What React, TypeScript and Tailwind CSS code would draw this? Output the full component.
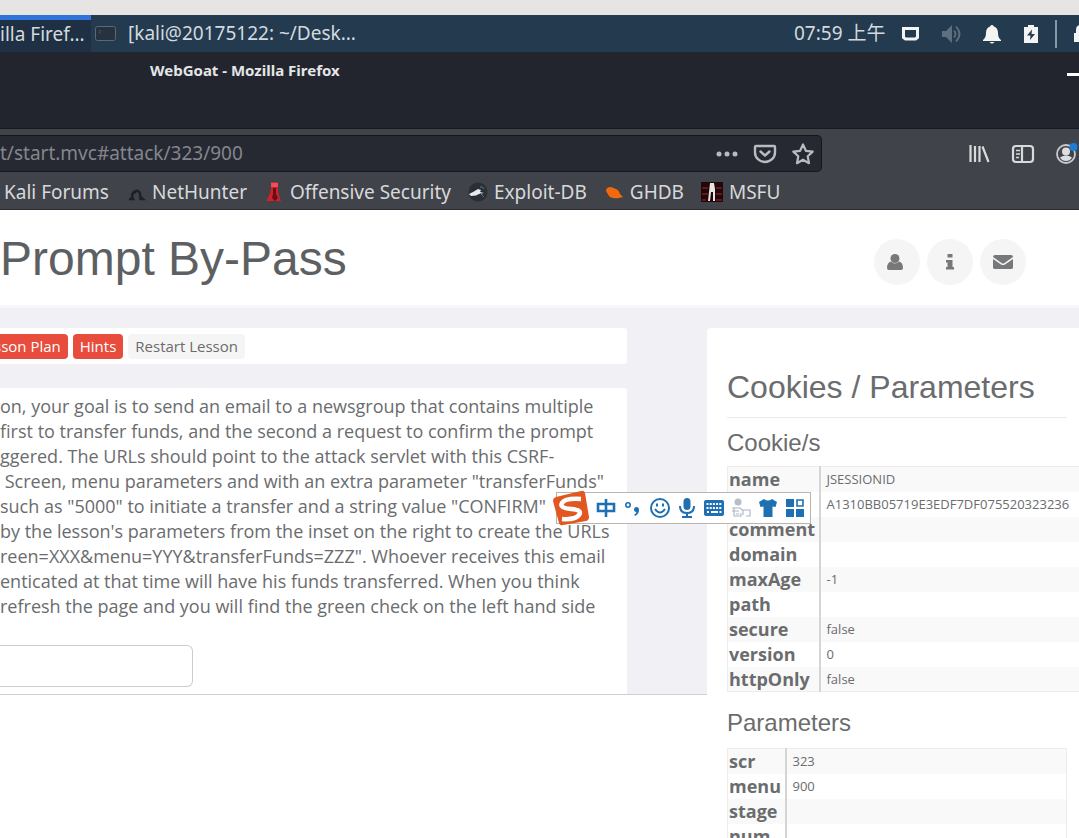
import type { ReactNode } from "react";

const lessonLines = [
  "on, your goal is to send an email to a newsgroup that contains multiple",
  "first to transfer funds, and the second a request to confirm the prompt",
  "ggered. The URLs should point to the attack servlet with this CSRF-",
  "\u00a0Screen, menu parameters and with an extra parameter \"transferFunds\"",
  "such as \"5000\" to initiate a transfer and a string value \"CONFIRM\"",
  "by the lesson's parameters from the inset on the right to create the URLs",
  "reen=XXX&menu=YYY&transferFunds=ZZZ\". Whoever receives this email",
  "enticated at that time will have his funds transferred. When you think",
  "refresh the page and you will find the green check on the left hand side",
];

const cookies = [
  ["name", "JSESSIONID"],
  ["value", "A1310BB05719E3EDF7DF075520323236"],
  ["comment", ""],
  ["domain", ""],
  ["maxAge", "-1"],
  ["path", ""],
  ["secure", "false"],
  ["version", "0"],
  ["httpOnly", "false"],
];

const parameters = [
  ["scr", "323"],
  ["menu", "900"],
  ["stage", ""],
  ["num", ""],
];

const Taskbar = () => (
  <div className="flex h-[37px] items-center bg-[#233a4f] font-['Noto_Sans','Noto_Sans_CJK_SC',sans-serif] text-[19px] text-[#d3d9de]">
    <button className="flex h-full w-[91px] items-center border-t-[5px] border-[#2f74d8] bg-[#1f3044] pb-1 whitespace-nowrap">
      illa Firef...
    </button>
    <button className="flex flex-1 items-center gap-3 pl-1 whitespace-nowrap">
      <svg viewBox="0 0 21 15" className="h-[15px] w-[21px]">
        <rect x="0.5" y="0.5" width="20" height="14" rx="2" fill="#26323f" stroke="#5b6976" />
        <path d="M4 4l2 1.5L4 7" fill="none" stroke="#4a5866" />
      </svg>
      [kali@20175122: ~/Desk...
    </button>
    <div className="flex w-[285px] shrink-0 items-center overflow-hidden whitespace-nowrap">
      <span className="w-[107px] shrink-0">07:59 上午</span>
      <svg viewBox="0 0 20 16" className="mr-[21px] h-4 w-5 shrink-0" fill="none" stroke="#f2f4f5" strokeWidth="3">
        <path d="M2.5 2.5h14v9l-2 1.5h-10l-2-1.5z" />
      </svg>
      <svg viewBox="0 0 20 20" className="mr-5 h-5 w-5 shrink-0" fill="#5e7080">
        <path d="M0 7h4l6-6v18l-6-6H0z" />
        <path d="M12 6.5q3 3.500 0 7M14 2.500q7 7.500 0 15" fill="none" stroke="#5e7080" strokeWidth="1.8" />
      </svg>
      <svg viewBox="0 0 20 20" className="mr-[21px] h-5 w-5 shrink-0" fill="#f4f4f4">
        <path d="M10 1c-1.300 0-1.700.8-1.800 1.500C5.500 3.300 4 5.500 4 8.500c0 5-1.500 6-3 7.500v1h18v-1c-1.500-1.500-3-2.500-3-7.500 0-3-1.500-5.200-4.200-6C11.700 1.800 11.300 1 10 1zM7.500 18h5q-2.500 3-5 0z" />
      </svg>
      <svg viewBox="0 0 16 20" className="mr-4 h-5 w-4 shrink-0">
        <path d="M5 1h6v2h4v16H1V3h4z" fill="#f4f4f4" />
        <path d="M9 5.500l-5 6h3.500L7 16l5-6H8.500z" fill="#233a4f" />
      </svg>
      <span className="mr-4 h-7 w-0.5 shrink-0 bg-[#8798a5]" />
      <svg viewBox="0 0 16 20" className="h-5 w-4 shrink-0" fill="#f4f4f4">
        <path d="M1 9h2V6q0-5 5-5t5 5v3h2v9H1z" />
      </svg>
    </div>
  </div>
);

const Bookmark = ({ label, children }: { label: string; children?: ReactNode }) => (
  <a href="#bookmark" className="flex items-center gap-1.5 whitespace-nowrap">
    {children}
    {label}
  </a>
);

const BrowserChrome = () => (
  <header className="font-['Noto_Sans',sans-serif]">
    <div className="flex h-[76px] items-start bg-[#22252e] pt-2 pl-[150px] text-[#e4e5e7]">
      <h2 className="flex-1 text-[15px] leading-5 font-bold">WebGoat - Mozilla Firefox</h2>
      <button aria-label="Minimize" className="flex h-7 w-3 items-center">
        <span className="h-[3px] w-full bg-white" />
      </button>
    </div>
    <div className="border-t border-b border-t-[#181a20] border-b-[#2b2c30] bg-[#404349]">
      <div className="flex items-center pt-1.5">
        <div className="flex h-[37px] flex-1 items-center rounded-r-[5px] border border-l-0 border-[#15171c] bg-[#262932] pr-1.5">
          <input
            aria-label="Address"
            defaultValue="t/start.mvc#attack/323/900"
            className="min-w-0 flex-1 bg-transparent text-[19px] text-[#83868e] outline-none"
          />
          <div className="flex items-center gap-3.5 text-[#b9bbc0]">
            <button aria-label="Page actions">
              <svg viewBox="0 0 24 24" className="h-6 w-6" fill="currentColor">
                <circle cx="4" cy="12" r="2.500" />
                <circle cx="12" cy="12" r="2.500" />
                <circle cx="20" cy="12" r="2.500" />
              </svg>
            </button>
            <button aria-label="Save to Pocket">
              <svg viewBox="0 0 24 24" className="h-6 w-6" fill="none" stroke="currentColor" strokeWidth="2.400" strokeLinecap="round" strokeLinejoin="round">
                <path d="M3 4h18q1 0 1 1v5.500a10 9.500 0 0 1-20 0V5q0-1 1-1z" />
                <path d="M7.500 9.500l4.500 4 4.500-4" />
              </svg>
            </button>
            <button aria-label="Bookmark this page">
              <svg viewBox="0 0 24 24" className="h-6 w-6" fill="none" stroke="currentColor" strokeWidth="2.200" strokeLinejoin="round">
                <path d="M12 2.500l2.900 6.300 6.800.8-5 4.700 1.300 6.900L12 17.700l-6 3.500 1.300-6.900-5-4.700 6.800-.8z" />
              </svg>
            </button>
          </div>
        </div>
        <div className="flex w-[257px] shrink-0 items-center gap-5 overflow-hidden pl-[145px] text-[#d9dadc]">
          <button aria-label="Library" className="shrink-0">
            <svg viewBox="0 0 24 24" className="h-6 w-6" fill="none" stroke="currentColor" strokeWidth="2.200">
              <path d="M3.500 3v17M8 4v16M12.500 4v16M15.500 4.500l6 15.500" />
            </svg>
          </button>
          <button aria-label="Sidebars" className="shrink-0">
            <svg viewBox="0 0 24 24" className="h-6 w-6" fill="none" stroke="currentColor" strokeWidth="2.200">
              <rect x="2" y="4" width="20" height="16" rx="3" />
              <path d="M11 4v16" />
              <path d="M5 8.500h4M5 12h4M5 15.500h3" strokeWidth="1.500" />
            </svg>
          </button>
          <button aria-label="Account" className="shrink-0">
            <svg viewBox="0 0 24 24" className="h-6 w-6">
              <circle cx="11" cy="12" r="9" fill="none" stroke="#c9cacd" strokeWidth="1.800" />
              <circle cx="11" cy="9.500" r="4" fill="#dcdde0" />
              <path d="M5 15.500q6-4 12 0-2 3.500-6 3.500t-6-3.500z" fill="#dcdde0" />
              <circle cx="18.500" cy="5" r="4" fill="#1a7ed6" />
            </svg>
          </button>
        </div>
      </div>
      <nav className="flex h-[37px] items-center gap-[17px] pt-0.5 pl-1 text-[19px] leading-6 text-[#d8d9db]">
        <Bookmark label="Kali Forums" />
        <Bookmark label="NetHunter">
          <svg viewBox="0 0 20 20" className="h-5 w-5" fill="none" stroke="#1d2025" strokeWidth="2.400">
            <path d="M3 17h4q-2-3 0-6t5-2q3 2 2 5l3 3h-4M6 11l4-1" />
          </svg>
        </Bookmark>
        <Bookmark label="Offensive Security">
          <svg viewBox="0 0 20 20" className="h-5 w-5">
            <path d="M7 0h7v8l1 6 2 5H2l3-5 2-6z" fill="#d1212b" />
            <path d="M7 1h7v4H7z" fill="#e2545a" />
            <path d="M9 6h3v6l2 4-3 3-3-3 1-4z" fill="#6d0d14" />
          </svg>
        </Bookmark>
        <Bookmark label="Exploit-DB">
          <svg viewBox="0 0 20 20" className="h-5 w-5">
            <circle cx="10" cy="10" r="9.500" fill="#2a2e35" />
            <path d="M1 12l4-2 5-3 3 1-1 2 4 1-5 1-3 1.500-5 .5z" fill="#e9eaec" />
            <path d="M12 5q3-1 4 2M12 11l4 4" fill="none" stroke="#6b7078" />
          </svg>
        </Bookmark>
        <Bookmark label="GHDB">
          <svg viewBox="0 0 20 20" className="h-5 w-5" fill="#f2690d">
            <path d="M2 9q0-4 5-4l5 2q3 1 4 5l3 3-4 1q-5 1-9-1-2-2-4-6z" />
          </svg>
        </Bookmark>
        <Bookmark label="MSFU">
          <svg viewBox="0 0 22 20" className="h-5 w-[22px]">
            <rect width="22" height="20" fill="#210709" />
            <path d="M1 6h6M1 12h6M15 6h6M15 12h6M15 18h6M1 18h4" stroke="#64181b" strokeWidth="2" />
            <path d="M9 1h4l1 6v12h-2V10h-2l-1 9H7l1-9z" fill="#e8e4e2" />
          </svg>
        </Bookmark>
      </nav>
    </div>
  </header>
);

const RoundButton = ({ label, children }: { label: string; children: ReactNode }) => (
  <button aria-label={label} className="flex h-[46px] w-[46px] items-center justify-center rounded-full bg-[#f5f5f5] text-[#77787a]">
    {children}
  </button>
);

const LessonHeader = () => (
  <div className="flex h-[98px] items-center justify-between border-b-[3px] border-[#f8f8fa] bg-white pr-[53px]">
    <h1 className="pt-0.5 font-['Liberation_Sans',sans-serif] text-5xl whitespace-nowrap text-[#5d6063]">Prompt By-Pass</h1>
    <div className="flex gap-[7px] pt-2">
      <RoundButton label="User">
        <svg viewBox="0 0 20 20" className="h-5 w-5" fill="currentColor">
          <circle cx="8" cy="6.500" r="4.500" />
          <path d="M4 9.500q4 4 8 0 4 1 4 6.500 0 2-2 2H2q-2 0-2-2 0-5.500 4-6.500z" />
        </svg>
      </RoundButton>
      <RoundButton label="About">
        <svg viewBox="0 0 20 20" className="h-5 w-5" fill="currentColor">
          <path d="M7.500 2h5v3.500h-5zM6 8h6.500v7H14v2.500H6V15h1.500v-4.500H6z" />
        </svg>
      </RoundButton>
      <RoundButton label="Contact">
        <svg viewBox="0 0 20 16" className="h-4 w-5" fill="currentColor">
          <path d="M2 1h16q2 0 2 2L11.500 9q-1.500 1-3 0L0 3q0-2 2-2z" />
          <path d="M0 5l8 5.500q2 1.200 4 0L20 5v8.500q0 1.500-2 1.500H2q-2 0-2-1.500z" />
        </svg>
      </RoundButton>
    </div>
  </div>
);

const DataTable = ({ rows, wide }: { rows: string[][]; wide?: boolean }) => (
  <table className={wide ? "w-[440px] border border-[#ededed]" : "w-[340px] border border-[#ededed]"}>
    <tbody>
      {rows.map(([key, value]) => (
        <tr key={key} className="h-[25px] odd:bg-[#f9f9f9]">
          <th scope="row" className={`${wide ? "w-[92px]" : "w-[58px]"} border-r-2 border-[#d5d5d5] pl-px text-left text-lg leading-6 font-bold`}>
            {key}
          </th>
          <td className="pl-1.5 text-[13px] leading-5 whitespace-nowrap">{value}</td>
        </tr>
      ))}
    </tbody>
  </table>
);

const Sidebar = () => (
  <aside className="w-[372px] shrink-0 rounded-tl-sm bg-white pt-[39px] pl-5">
    <h2 className="mr-3 border-b border-[#ebebeb] pb-2.5 font-['Liberation_Sans',sans-serif] text-[32px] leading-10">
      Cookies / Parameters
    </h2>
    <h3 className="pt-2.5 pb-2 font-['Liberation_Sans',sans-serif] text-2xl leading-[30px]">Cookie/s</h3>
    <DataTable rows={cookies} wide />
    <h3 className="pt-4 pb-2.5 font-['Liberation_Sans',sans-serif] text-2xl leading-[30px]">Parameters</h3>
    <DataTable rows={parameters} />
  </aside>
);

const Lesson = () => (
  <main className="min-w-0 flex-1">
    <div className="border-b border-[#cfcfd2] bg-[#f0f0f5] pr-20">
      <div className="mb-6 flex h-9 items-center gap-[5px] rounded-r-[3px] bg-white text-[15px] leading-[25px]">
        <button className="-ml-1.5 rounded-r-[4px] bg-[#e74c3c] pr-[7px] text-white">sson Plan</button>
        <button className="rounded-[4px] bg-[#e74c3c] px-[7px] text-white">Hints</button>
        <button className="rounded-[4px] bg-[#f5f5f5] px-[7px]">Restart Lesson</button>
      </div>
      <div className="rounded-tr-[3px] bg-white pt-1.5 pb-[7px]">
        <p className="text-lg leading-[25px] whitespace-nowrap">
          {lessonLines.map((line) => (
            <span key={line} className="block">{line}</span>
          ))}
        </p>
        <input
          aria-label="Title"
          className="mt-[26px] block h-[42px] w-[193px] rounded-r-[6px] border border-l-0 border-[#cccccc] bg-white outline-none"
        />
      </div>
    </div>
  </main>
);

// Floating input method toolbar
const ImeBar = () => (
  <div className="absolute top-[492px] left-[556px] flex h-8 w-[255px] items-center gap-[7px] border border-[#b9b4ae] bg-white text-[#1f70b3]">
    <svg viewBox="0 0 36 36" className="-ml-1 h-9 w-9 shrink-0">
      <path d="M3 7L28 1q3-1 4 2l4 24q0 3-3 4L10 35q-3 1-4-2L0 11q0-3 3-4z" fill="#e2561f" />
      <path d="M28 9Q12 8 9 13t9 6 8 6-17 4" fill="none" stroke="#fff" strokeWidth="4.500" />
    </svg>
    <svg viewBox="0 0 20 20" className="h-5 w-5 shrink-0" fill="none" stroke="currentColor" strokeWidth="2.600">
      <path d="M2 6h16v7H2zM10 1v18" />
    </svg>
    <svg viewBox="0 0 20 20" className="h-5 w-5 shrink-0">
      <circle cx="5" cy="7" r="2.200" fill="none" stroke="currentColor" strokeWidth="1.600" />
      <path d="M11 11.500q0-2.500 2.500-2.500t2.500 3q0 4-4 6l-.8-1.300q2-1.200 2.300-2.700-2.500 0-2.500-2.500z" fill="currentColor" />
    </svg>
    <svg viewBox="0 0 20 20" className="h-5 w-5 shrink-0" fill="none" stroke="currentColor" strokeWidth="2">
      <circle cx="10" cy="10" r="9" />
      <path d="M5 11q5 7 10 0M7 5.500v3M13 5.500v3" />
    </svg>
    <svg viewBox="0 0 20 20" className="h-5 w-5 shrink-0">
      <rect x="6.500" y="0" width="7" height="12" rx="3.500" fill="currentColor" />
      <path d="M3 8q0 7 7 7t7-7M10 15v4M5 19h10" fill="none" stroke="currentColor" strokeWidth="2" />
    </svg>
    <svg viewBox="0 0 20 16" className="h-4 w-5 shrink-0">
      <rect width="20" height="16" rx="2" fill="currentColor" />
      <path d="M2.500 4h15M2.500 8h15" stroke="#fff" strokeWidth="2" strokeDasharray="2 1.200" />
      <path d="M3 12h2M7 12h7M15.500 12h2" stroke="#fff" strokeWidth="2" />
    </svg>
    <svg viewBox="0 0 20 20" className="h-5 w-5 shrink-0" fill="none" stroke="#a9b5c5">
      <circle cx="7" cy="4" r="3.500" fill="#b4bdca" stroke="none" />
      <path d="M1 10h8l2 2h8v6h-4M1 13h7M3 10v8h7v-3M5 16h3M12 12v5" strokeWidth="1.100" />
    </svg>
    <svg viewBox="0 0 20 20" className="h-5 w-5 shrink-0" fill="currentColor">
      <path d="M6 1q4 3 8 0l5 3-1.500 5-3-.5V19h-9V8.500l-3 .5L1 4z" />
    </svg>
    <svg viewBox="0 0 20 20" className="h-5 w-5 shrink-0" fill="currentColor">
      <path d="M1 1h8v8H1zM1 11h8v8H1zM11 11h8v8h-8z" />
      <path d="M12 2h6v6h-6z" fill="none" stroke="currentColor" strokeWidth="1.600" />
    </svg>
  </div>
);

const App = () => {
  return (
    <div className="relative h-screen overflow-hidden bg-white font-['Open_Sans',sans-serif] text-[#6a6c6e]">
      <div className="h-[15px] bg-[#e6e5e4]" />
      <Taskbar />
      <BrowserChrome />
      <LessonHeader />
      <div className="h-5 bg-[#f0f0f5]" />
      <div className="flex items-start bg-[linear-gradient(to_bottom,#f0f0f5_366px,#ffffff_366px)]">
        <Lesson />
        <Sidebar />
      </div>
      <ImeBar />
    </div>
  );
};

export default App;
